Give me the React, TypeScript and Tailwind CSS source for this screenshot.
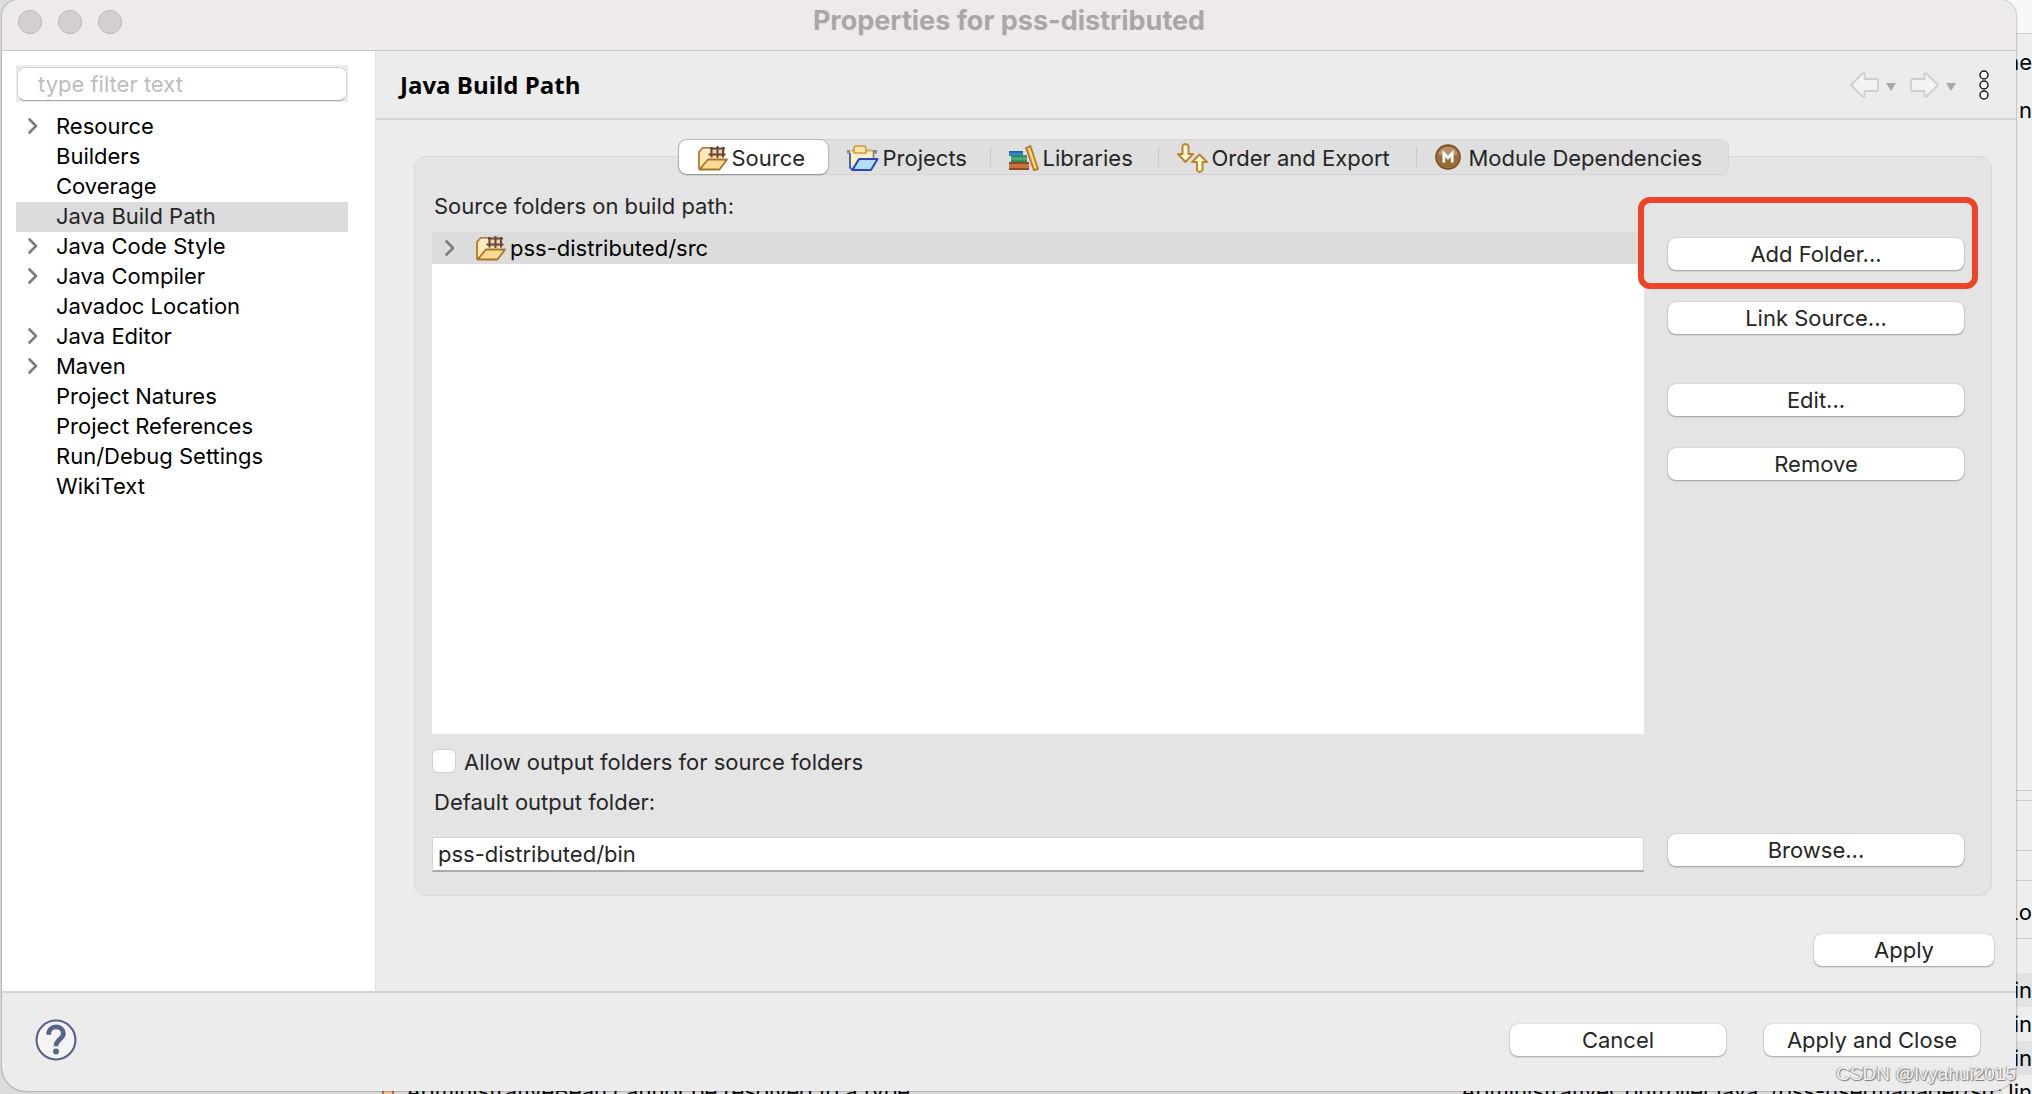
import { useState } from "react";
import clsx from "clsx";

const categories = [
  { name: "Resource", expandable: true },
  { name: "Builders" },
  { name: "Coverage" },
  { name: "Java Build Path" },
  { name: "Java Code Style", expandable: true },
  { name: "Java Compiler", expandable: true },
  { name: "Javadoc Location" },
  { name: "Java Editor", expandable: true },
  { name: "Maven", expandable: true },
  { name: "Project Natures" },
  { name: "Project References" },
  { name: "Run/Debug Settings" },
  { name: "WikiText" },
];

const Chevron = () => (
  <svg className="h-[18px] w-3 shrink-0" viewBox="0 0 12 18" fill="none" stroke="#7b7b7b" strokeWidth="2.6" strokeLinecap="round" strokeLinejoin="round">
    <path d="m2.500 2.500 6.500 6.500-6.500 6.500" />
  </svg>
);

const PackageFolderIcon = () => (
  <svg className="h-[26px] w-[30px] shrink-0" viewBox="0 0 30 26">
    <path d="M1 24V7l3.500-4H13v9h13v2z" fill="#fbe9b8" />
    <path d="M1 24V7l3.500-4H13" fill="none" stroke="#b57a33" strokeWidth="1.8" strokeLinejoin="round" />
    <path d="M5 4.500h8" stroke="#fff" strokeWidth="1.500" />
    <path d="M12 4h15v8H12z" fill="#e9d3b0" />
    <path d="M12 3.500h15M10.500 9.500h17M13.500 2v10.500M19.500 1v12M25 2v10.500" stroke="#6b4535" strokeWidth="2" />
    <path d="M1.500 24.500 10 14.500h19L21.500 24.500z" fill="#f8dc92" stroke="#a9722c" strokeWidth="1.8" strokeLinejoin="round" />
  </svg>
);

const ProjectsIcon = () => (
  <svg className="h-[26px] w-[32px] shrink-0" viewBox="0 0 32 26">
    <path d="M0 5h30v3.500H0z" fill="#8d8391" />
    <path d="M3 23V5h23v9H11z" fill="#fdf0c4" />
    <path d="M4 5.500h22" stroke="#d9a95a" strokeWidth="2" />
    <path d="M7 8V2.500L8.500 1h9L19 2.500V8z" fill="#fbe6a8" stroke="#c89a4a" strokeWidth="1.600" />
    <path d="M3 8v14.500L5.500 25" fill="none" stroke="#4a63c0" strokeWidth="2" />
    <path d="M26.500 6v7" stroke="#8e7d80" strokeWidth="1.600" />
    <path d="M5.500 25 12 14h18.500L24 25z" fill="#b4dcfb" stroke="#2f46b5" strokeWidth="2" strokeLinejoin="round" />
  </svg>
);

const LibrariesIcon = () => (
  <svg className="h-[26px] w-[30px] shrink-0" viewBox="0 0 30 26">
    <path d="M0 6h14v5H0z" fill="#2f86c9" />
    <path d="M0 6h14v1.500H0z" fill="#1e5f9e" />
    <path d="M2 10.500h16V17H2z" fill="#4fa878" />
    <path d="M2 10.500h16V12H2zM2 15.500h16V17H2z" fill="#2f7f55" />
    <path d="M0 17h20v8H0z" fill="#c4733e" />
    <path d="M0 17h20v2H0zM0 23h20v2H0z" fill="#8e4a25" />
    <path d="m17 3 4.500-2L29 24l-4 1.500z" fill="#f2b33d" stroke="#b87420" strokeWidth="1.600" />
    <path d="m20 3 6.500 20" stroke="#fbe2a0" strokeWidth="1.600" />
  </svg>
);

const OrderIcon = () => (
  <svg className="h-[30px] w-[31px] shrink-0" viewBox="0 0 31 30" fill="#fff8d6" stroke="#b9862b" strokeWidth="2" strokeLinejoin="round">
    <path d="M5.500 3q3-4 6 0v8h4.500l-7.500 8L1 11h4.500z" />
    <path d="M20 27q2.500 4 5.500 0v-8H30L22.500 11.500 15 19h5z" />
  </svg>
);

const ModuleIcon = () => (
  <svg className="mr-1 -mt-[2px] h-[26px] w-[26px] shrink-0" viewBox="0 0 28 28">
    <circle cx="14" cy="14" r="13" fill="#9a6c3a" stroke="#7a4f22" strokeWidth="1.600" />
    <path d="M3.500 11a11 11 0 0 1 21 0q-10 5-21 0" fill="#b8946b" />
    <path d="M9.500 20V10l4.500 5 4.500-5v10" fill="none" stroke="#fff" strokeWidth="3" />
  </svg>
);

const tabs = [
  { name: "Source", icon: <PackageFolderIcon />, width: "w-[149px]" },
  { name: "Projects", icon: <ProjectsIcon />, width: "w-[162px]" },
  { name: "Libraries", icon: <LibrariesIcon />, width: "w-[168px]" },
  { name: "Order and Export", icon: <OrderIcon />, width: "w-[258px]" },
  { name: "Module Dependencies", icon: <ModuleIcon />, width: "w-[312px]" },
];

interface PushButtonProps {
  label: string;
  className?: string;
}

const PushButton = ({ label, className }: PushButtonProps) => (
  <button
    type="button"
    className={clsx(
      "h-8 rounded-lg bg-white text-center leading-8 shadow-[0_0_1px_rgba(0,0,0,0.3),0_1px_2px_rgba(0,0,0,0.3)]",
      className
    )}
  >
    {label}
  </button>
);

const NavArrow = ({ flip }: { flip?: boolean }) => (
  <button type="button" aria-label={flip ? "Forward" : "Back"} className="flex items-center gap-[7px]">
    <svg className={clsx("h-[26px] w-[29px]", flip && "-scale-x-100")} viewBox="0 0 29 26" fill="#f3f3f3" stroke="#cfcfcf" strokeWidth="1.800" strokeLinejoin="round">
      <path d="M1 13 12.500 1.500h2V7H26q2 0 2 2v8q0 2-2 2H14.500v5.500h-2z" />
    </svg>
    <svg className="mt-1 h-2 w-[10px]" viewBox="0 0 10 8" fill="#a9a9a9">
      <path d="M0 0h10L5 8z" />
    </svg>
  </button>
);

const TitleBar = () => (
  <header className="flex h-[51px] shrink-0 items-center border-b border-[#c9c6c7] bg-[#eeeaeb] px-4">
    <div className="flex flex-1 gap-4 pb-[6px]">
      {["Close", "Minimize", "Zoom"].map((name) => (
        <button key={name} type="button" aria-label={name} className="h-6 w-6 rounded-full border border-[#b9b5b6] bg-[#d3cfd0]" />
      ))}
    </div>
    <h1 className="pb-2 text-[27px] leading-8 font-bold text-[#aaa6a7]">Properties for pss-distributed</h1>
    <div className="flex-1" />
  </header>
);

const Sidebar = ({ selected, onSelect }: { selected: string; onSelect: (name: string) => void }) => (
  <aside className="w-[374px] shrink-0 border-r border-[#dfdfdf] bg-white pt-[14px] pr-[27px] pl-[14px]">
    <div className="bg-[#ececec] px-px pt-[2px] pb-px">
      <input
        type="text"
        aria-label="Filter"
        placeholder="type filter text"
        className="block h-[34px] w-full rounded-lg border border-[#d5d5d5] border-b-[#a8a8a8] bg-white px-5 placeholder:text-[#bdbdbd]"
      />
    </div>
    <ul className="mt-[10px]">
      {categories.map(({ name, expandable }) => (
        <li key={name}>
          <button
            type="button"
            onClick={() => onSelect(name)}
            className={clsx(
              "flex h-[30px] w-full items-center pb-[2px] pl-[11px] text-left leading-7",
              selected === name ? "bg-[#dcdcdc]" : "text-black"
            )}
          >
            <span className="w-[29px]">{expandable && <Chevron />}</span>
            {name}
          </button>
        </li>
      ))}
    </ul>
  </aside>
);

const SourcePanel = () => (
  <div className="flex pt-[15px] pr-[27px] pb-[23px] pl-[17px]">
    <div className="flex min-w-0 flex-1 flex-col">
      <p className="pl-[2px] leading-[30px]">Source folders on build path:</p>
      <div className="mt-[11px] h-[502px] bg-white">
        <button type="button" className="flex h-8 w-full items-center bg-[#dcdcdc] pl-3 text-left text-black">
          <Chevron />
          <span className="ml-5 flex items-center gap-1">
            <PackageFolderIcon />
            pss-distributed/src
          </span>
        </button>
      </div>
      <label className="mt-3 flex items-center gap-2 leading-8">
        <input
          type="checkbox"
          className="-mt-[3px] h-6 w-6 appearance-none rounded-md border border-[#d0d0d0] bg-white checked:bg-blue-500"
        />
        Allow output folders for source folders
      </label>
      <label htmlFor="output-folder" className="mt-2 pl-[2px] leading-8">
        Default output folder:
      </label>
      <input
        id="output-folder"
        type="text"
        defaultValue="pss-distributed/bin"
        className="mt-[19px] h-[35px] w-full border border-[#d4d4d4] border-b-2 border-b-[#a9a9a9] bg-white px-[5px]"
      />
    </div>
    <div className="ml-6 flex w-[296px] flex-col pt-[47px]">
      <div className="relative flex flex-col">
        <PushButton label="Add Folder..." />
        <div className="pointer-events-none absolute -top-[41px] -right-[14px] -bottom-[19px] -left-[30px] rounded-xl border-6 border-[#eb4427]" />
      </div>
      <PushButton label="Link Source..." className="mt-8" />
      <PushButton label="Edit..." className="mt-[50px]" />
      <PushButton label="Remove" className="mt-8" />
      <PushButton label="Browse..." className="mt-auto mb-[6px]" />
    </div>
  </div>
);

const BuildPathPage = () => {
  const [active, setActive] = useState("Source");

  return (
    <main className="flex min-w-0 flex-1 flex-col">
      <div className="flex h-[69px] items-center justify-between border-b-2 border-[#d6d6d6] pt-px pr-[26px] pl-6">
        <h2 className="font-['Open_Sans','Noto_Sans',sans-serif] text-[24px] font-bold text-black">Java Build Path</h2>
        <div className="flex items-center gap-[14px]">
          <NavArrow />
          <NavArrow flip />
          <button type="button" aria-label="View menu" className="ml-2">
            <svg className="h-[30px] w-3" viewBox="0 0 12 30" fill="#fff" stroke="#1c1c1c" strokeWidth="1.500">
              <circle cx="6" cy="5" r="4" />
              <circle cx="6" cy="15" r="4" />
              <circle cx="6" cy="25" r="4" />
            </svg>
          </button>
        </div>
      </div>

      <div className="pt-[19px] pr-6 pl-[38px]">
        <div role="tablist" className="relative z-10 mx-auto flex h-9 w-fit items-center rounded-lg border border-[#d5d5d5] bg-[#dfdfdf]">
          {tabs.map(({ name, icon, width }, i) => (
            <button
              key={name}
              type="button"
              role="tab"
              aria-selected={active === name}
              onClick={() => setActive(name)}
              className={clsx(
                "flex h-[34px] items-center",
                width,
                active === name && "rounded-lg bg-white shadow-[0_0_2px_rgba(0,0,0,0.4),0_1px_2px_rgba(0,0,0,0.25)]"
              )}
            >
              <span className={clsx("mr-[18px] h-5 w-px", i > 1 && "bg-[#c9c9c9]")} />
              <span className="flex items-center gap-1 pt-[2px]">
                {icon}
                {name}
              </span>
            </button>
          ))}
        </div>
        <div className="-mt-[19px] rounded-xl border border-[#d9d9d9] bg-[#e4e4e4] pt-[19px]">
          <SourcePanel />
        </div>
      </div>

      <div className="flex justify-end pt-[38px] pr-[22px] pb-6">
        <PushButton label="Apply" className="w-[180px]" />
      </div>
    </main>
  );
};

const Footer = () => (
  <footer className="flex h-[100px] items-center border-t-2 border-[#d3d3d3] pr-9 pb-1 pl-[33px]">
    <button type="button" aria-label="Help" className="h-[42px] w-[42px]">
      <svg viewBox="0 0 40 40" fill="none" stroke="#56648a">
        <circle cx="20" cy="20" r="18.500" fill="#f4f4f5" strokeWidth="2" />
        <path d="M13 15c0-5 3-7.500 7-7.500s7 2.500 7 6.500c0 5-7 5.500-7 12" strokeWidth="4.500" />
        <circle cx="20" cy="31" r="2.800" fill="#56648a" stroke="none" />
      </svg>
    </button>
    <div className="ml-auto flex gap-[38px]">
      <PushButton label="Cancel" className="w-[216px]" />
      <PushButton label="Apply and Close" className="w-[216px]" />
    </div>
  </footer>
);

// pieces of the editor window that stay visible behind the dialog
const BehindRight = () => (
  <div className="absolute inset-y-0 right-0 flex w-[30px] flex-col items-end overflow-hidden bg-[#eeeeee] text-right leading-[34px] text-black">
    <div className="h-[34px] w-full shrink-0 border-b border-[#cfcfcf] bg-[#f8f8f8]" />
    <span className="mt-[11px]">ne</span>
    <span className="mt-[14px]">n</span>
    <div className="mt-[663px] h-[11px] w-full shrink-0 border-y border-[#cfcfcf]" />
    <div className="h-[50px] w-full shrink-0 border-b border-[#cfcfcf]" />
    <div className="h-[30px] w-full shrink-0 border-b border-[#cfcfcf]" />
    <div className="flex h-[58px] w-full shrink-0 items-center justify-end border-b border-[#cfcfcf] pt-1">Lo</div>
    <div className="mt-[34px] h-[34px] w-full shrink-0 bg-[#e2e2e2]">in</div>
    <div className="h-[34px] w-full shrink-0">in</div>
    <div className="h-[34px] w-full shrink-0 bg-[#e2e2e2]">in</div>
    <div className="h-[34px] w-full shrink-0">lin</div>
  </div>
);

const App = () => {
  const [selected, setSelected] = useState("Java Build Path");

  return (
    <div className="relative min-h-screen overflow-hidden bg-[#dcdcdc] pr-4 pb-[3px] pl-[2px] font-[Inter,'Liberation_Sans',sans-serif] text-[22px] text-[#262626]">
      <BehindRight />
      <div className="absolute right-[30px] -bottom-3 left-0 flex justify-between pl-[382px] leading-[30px] text-black">
        <span className="flex gap-3">
          <span className="w-3 border-x-2 border-[#d2604a] bg-[#f0c48a]" />
          AdministrativeBean cannot be resolved to a type
        </span>
        <span className="flex gap-3">
          <span>AdministrativeController.java</span>
          <span>/pss-usermanager/src</span>
        </span>
      </div>
      <div className="relative flex min-h-[1091px] flex-col overflow-hidden rounded-t-2xl rounded-b-3xl bg-[#ececec] shadow-[0_0_2px_rgba(0,0,0,0.6)]">
        <TitleBar />
        <div className="flex flex-1">
          <Sidebar selected={selected} onSelect={setSelected} />
          <BuildPathPage />
        </div>
        <Footer />
      </div>
      <p className="absolute right-4 bottom-1 font-['Liberation_Sans',sans-serif] text-[19px] leading-8 text-[#f2f2f2] [text-shadow:1px_1px_1px_#777,-1px_0_1px_#999]">
        CSDN @lvyahui2015
      </p>
    </div>
  );
};

export default App;
